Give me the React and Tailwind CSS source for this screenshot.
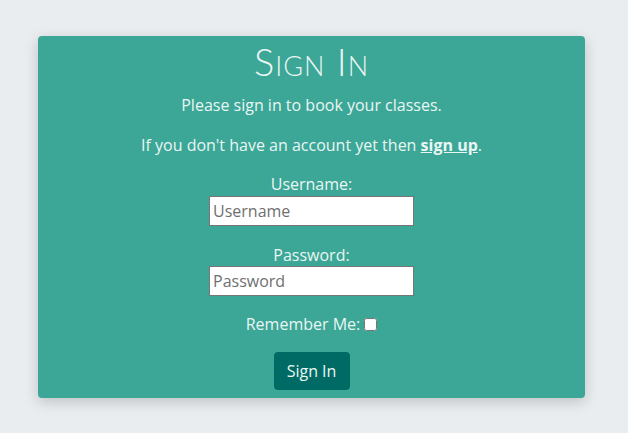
import React from "react";

export default function App() {
  return (
    <div className="min-h-screen w-full bg-[#e9edf0] pt-[36px] font-['Open_Sans',sans-serif]">
      <div className="ml-[38px] w-[547px] rounded-[4px] bg-[#3ca697] pb-[8px] text-center text-[#eaf6f3] shadow-[0_4px_14px_rgba(0,0,0,0.18)]">
        {/* Title */}
        <h1 className="pt-[2px] font-['Lato',sans-serif] text-[38px] font-light leading-[46px] tracking-[1px] [font-variant:small-caps]">
          Sign In
        </h1>

        <p className="mt-[11px] text-[16px] leading-[20px]">Please sign in to book your classes.</p>
        <p className="mt-[20px] text-[16px] leading-[20px]">
          If you don't have an account yet then{" "}
          <a href="#" className="font-bold underline">sign up</a>.
        </p>

        <form className="mt-[19px] flex flex-col items-center">
          <label className="text-[16px] leading-[20px]">Username:</label>
          <input
            type="text"
            placeholder="Username"
            className="mt-[2px] h-[30px] w-[205px] border border-[#767676] bg-white px-[3px] text-[16px] text-[#333] placeholder:text-[#6f6f6f]"
          />

          <label className="mt-[19px] text-[16px] leading-[20px]">Password:</label>
          <input
            type="password"
            placeholder="Password"
            className="mt-[1px] h-[30px] w-[205px] border border-[#767676] bg-white px-[3px] text-[16px] text-[#333] placeholder:text-[#6f6f6f]"
          />

          <div className="mt-[18px] flex items-center gap-[4px] text-[16px] leading-[20px]">
            <span>Remember Me:</span>
            <input type="checkbox" className="h-[13px] w-[13px]" />
          </div>

          <button
            type="button"
            className="mt-[18px] h-[38px] w-[76px] rounded-[4px] bg-[#006b65] text-[16px] text-[#eaf6f3]"
          >
            Sign In
          </button>
        </form>
      </div>
    </div>
  );
}
